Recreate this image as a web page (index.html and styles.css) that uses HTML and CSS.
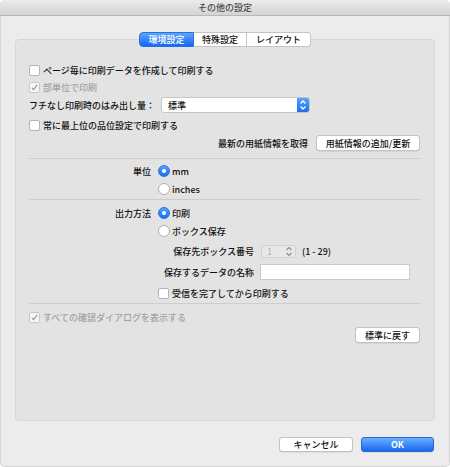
FILE: index.html
```html
<!DOCTYPE html>
<html lang="ja">
<head>
<meta charset="utf-8">
<link rel="stylesheet" href="styles.css">
</head>
<body>
<div class="window">
  <div class="titlebar">その他の設定</div>
  <div class="content">
    <div class="tabs">
      <span class="tab active">環境設定</span>
      <span class="tab">特殊設定</span>
      <span class="tab last">レイアウト</span>
    </div>
    <div class="panel">
      <div class="row r1">
        <span class="cb"></span><span class="txt">ページ毎に印刷データを作成して印刷する</span>
      </div>
      <div class="row r2 disabled">
        <span class="cb checked"><svg viewBox="0 0 11 11" width="11" height="11"><path d="M2.3 5.8 L4.4 8.2 L8.8 2.2" fill="none" stroke="#8a8a8a" stroke-width="1.3"/></svg></span><span class="txt">部単位で印刷</span>
      </div>
      <div class="row r3">
        <span class="txt">フチなし印刷時のはみ出し量：</span>
        <span class="popup"><span class="popup-val">標準</span><span class="popup-arrows"><svg viewBox="0 0 12 16" width="12" height="16"><path d="M3.5 6.5 L6 4 L8.5 6.5 M3.5 9.5 L6 12 L8.5 9.5" fill="none" stroke="#fff" stroke-width="1.4"/></svg></span></span>
      </div>
      <div class="row r4">
        <span class="cb"></span><span class="txt">常に最上位の品位設定で印刷する</span>
      </div>
      <div class="row r5 end">
        <span class="txt">最新の用紙情報を取得</span>
        <span class="btn btn-paper">用紙情報の追加/更新</span>
      </div>
      <div class="sep s1"></div>
      <div class="row r7">
        <span class="lbl">単位</span>
        <span class="radio on"></span><span class="txt">mm</span>
      </div>
      <div class="row r8">
        <span class="lbl"></span>
        <span class="radio"></span><span class="txt">inches</span>
      </div>
      <div class="sep s2"></div>
      <div class="row r10">
        <span class="lbl">出力方法</span>
        <span class="radio on"></span><span class="txt">印刷</span>
      </div>
      <div class="row r11">
        <span class="lbl"></span>
        <span class="radio"></span><span class="txt">ボックス保存</span>
      </div>
      <div class="row r12 sub">
        <span class="sublbl">保存先ボックス番号</span>
        <span class="stepper"><span class="stepper-val">1</span><svg viewBox="0 0 10 13" width="10" height="13"><path d="M2.5 5 L5 2.6 L7.5 5 M2.5 8 L5 10.4 L7.5 8" fill="none" stroke="#8c8c8c" stroke-width="1.1"/></svg></span>
        <span class="txt range">(1 - 29)</span>
      </div>
      <div class="row r13 sub">
        <span class="sublbl">保存するデータの名称</span>
        <span class="field"></span>
      </div>
      <div class="row r14 indent">
        <span class="cb"></span><span class="txt">受信を完了してから印刷する</span>
      </div>
      <div class="sep s3"></div>
      <div class="row r16 disabled">
        <span class="cb checked"><svg viewBox="0 0 11 11" width="11" height="11"><path d="M2.3 5.8 L4.4 8.2 L8.8 2.2" fill="none" stroke="#8a8a8a" stroke-width="1.3"/></svg></span><span class="txt">すべての確認ダイアログを表示する</span>
      </div>
      <div class="row r17 end">
        <span class="btn btn-default">標準に戻す</span>
      </div>
    </div>
    <div class="footer">
      <span class="btn btn-cancel">キャンセル</span>
      <span class="btn btn-ok">OK</span>
    </div>
  </div>
</div>
</body>
</html>
```
FILE: styles.css
```css
html, body {
  margin: 0;
  padding: 0;
  background: #ffffff;
}
body {
  font-family: "Noto Sans CJK JP", "Noto Sans", sans-serif;
  font-size: 9px;
  font-weight: 500;
  color: #111111;
}
.window {
  width: 450px;
  height: 467px;
  background: #ececec;
  border-radius: 5px;
  overflow: hidden;
  box-sizing: border-box;
  box-shadow: inset 0 0 0 1px #d4d4d4;
}
.titlebar {
  height: 15px;
  line-height: 16px;
  text-align: center;
  color: #4a4a4a;
  background: linear-gradient(#ebebeb, #d4d4d4);
  border-bottom: 1px solid #b8b8b8;
}
.content {
  padding: 16px 15px 0 15px;
}
.tabs {
  position: relative;
  z-index: 1;
  display: flex;
  justify-content: center;
  height: 15px;
}
.tab {
  display: flex;
  align-items: center;
  justify-content: center;
  height: 15px;
  box-sizing: border-box;
  background: #ffffff;
  border: 1px solid #c4c4c4;
  border-left: none;
  color: #111111;
  width: 53px;
  line-height: 1;
}
.tab.active {
  width: 55px;
  background: linear-gradient(#5aa6ff, #1668f2);
  border-color: #2a6fe0;
  color: #ffffff;
  border-radius: 4px 0 0 4px;
  border-left: 1px solid #2a6fe0;
}
.tab.last {
  width: 64px;
  border-radius: 0 4px 4px 0;
}
.panel {
  margin-top: -8px;
  height: 382px;
  box-sizing: border-box;
  background: #e3e3e3;
  border: 1px solid #d7d7d7;
  border-radius: 4px;
  padding: 21px 13px 0 13px;
}
.row {
  display: flex;
  align-items: center;
  height: 18px;
  white-space: nowrap;
}
.row.end {
  justify-content: flex-end;
  padding-right: 1px;
}
.r2 { margin-top: -1px; }
.r4 { margin-top: 2px; }
.r5 { gap: 8px; }
.sep {
  height: 1px;
  background: #cdcdcd;
}
.s1 { margin-top: 6px; margin-bottom: 3px; }
.s2 { margin-top: 1px; margin-bottom: 4px; }
.r12 { margin-top: 2px; }
.r13 { margin-top: 3px; }
.r14 { margin-top: 3px; }
.s3 { margin-top: 1px; margin-bottom: 4px; }
.r17 { margin-top: 0; }

.disabled .txt { color: #a2a2a2; }

.cb {
  width: 11px;
  height: 11px;
  box-sizing: border-box;
  background: #ffffff;
  border: 1px solid #b4b4b4;
  border-radius: 2px;
  margin-right: 3px;
  display: flex;
  align-items: center;
  justify-content: center;
}
.cb svg { display: block; }
.cb.checked {
  border-color: #c8c8c8;
  background: #f6f6f6;
}
.indent { padding-left: 129px; }

.popup {
  display: flex;
  align-items: center;
  width: 149px;
  height: 16px;
  box-sizing: border-box;
  margin-left: 6px;
  background: #ffffff;
  border: 1px solid #c6c6c6;
  border-radius: 3px;
  overflow: hidden;
}
.popup-val {
  flex: 1;
  padding-left: 6px;
}
.popup-arrows {
  width: 12px;
  height: 16px;
  background: linear-gradient(#5aa6ff, #1668f2);
  display: flex;
}
.popup-arrows svg { display: block; }

.btn {
  display: flex;
  align-items: center;
  justify-content: center;
  box-sizing: border-box;
  background: #ffffff;
  border: 1px solid #c2c2c2;
  border-radius: 3px;
  box-shadow: 0 0.5px 0.5px rgba(0, 0, 0, 0.12);
  color: #111111;
  line-height: 1;
}
.btn-paper {
  width: 104px;
  height: 16px;
}
.btn-default {
  width: 65px;
  height: 16px;
}

.lbl {
  width: 122px;
  margin-right: 7px;
  text-align: right;
}
.radio {
  width: 12px;
  height: 12px;
  box-sizing: border-box;
  border-radius: 50%;
  background: #ffffff;
  border: 1px solid #b0b0b0;
  margin-right: 2px;
  position: relative;
}
.radio.on {
  background: linear-gradient(#52a0ff, #1a6ef3);
  border-color: #2e72e0;
}
.radio.on::after {
  content: "";
  position: absolute;
  left: 3px;
  top: 3px;
  width: 4px;
  height: 4px;
  border-radius: 50%;
  background: #ffffff;
}

.sub { padding-left: 129px; }
.sublbl {
  width: 96px;
  margin-right: 6px;
  text-align: right;
}
.stepper {
  display: flex;
  align-items: center;
  justify-content: space-between;
  width: 35px;
  height: 13px;
  box-sizing: border-box;
  margin-left: 1px;
  padding: 0 1px 0 5px;
  border: 1px solid #d2d2d2;
  border-radius: 3px;
  background: #e8e8e8;
  color: #b0b0b0;
  font-weight: 400;
}
.stepper svg { display: block; }
.range { margin-left: 6px; }
.field {
  width: 150px;
  height: 16px;
  box-sizing: border-box;
  background: #ffffff;
  border: 1px solid #cbcbcb;
}

.footer {
  display: flex;
  justify-content: flex-end;
  gap: 8px;
  margin-top: 16px;
  padding-right: 1px;
}
.btn-cancel {
  width: 74px;
  height: 15px;
}
.btn-ok {
  width: 73px;
  height: 15px;
  background: linear-gradient(#69b0ff, #1767f0);
  border-color: #2a66d8;
  color: #ffffff;
  font-weight: 700;
}
```
